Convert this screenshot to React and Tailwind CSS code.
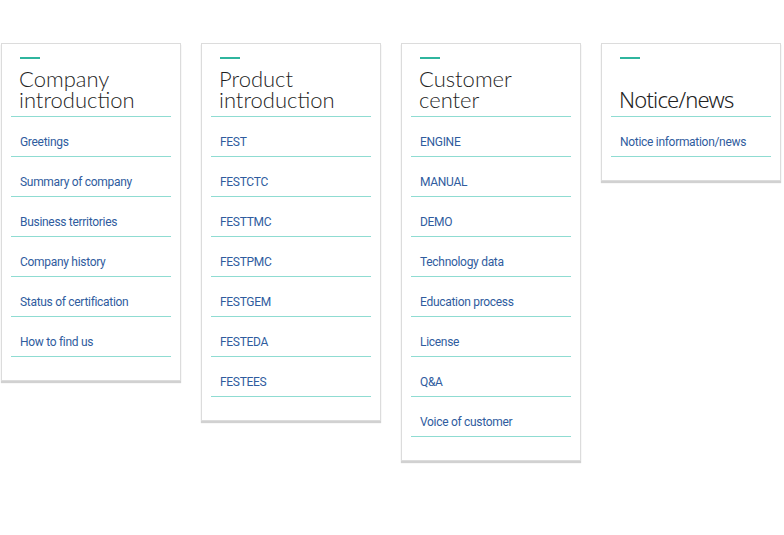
import React from "react";

const cards = [
  { title: ["Company", "introduction"], items: ["Greetings", "Summary of company", "Business territories", "Company history", "Status of certification", "How to find us"] },
  { title: ["Product", "introduction"], items: ["FEST", "FESTCTC", "FESTTMC", "FESTPMC", "FESTGEM", "FESTEDA", "FESTEES"] },
  { title: ["Customer", "center"], items: ["ENGINE", "MANUAL", "DEMO", "Technology data", "Education process", "License", "Q&A", "Voice of customer"] },
  { title: ["Notice/news"], items: ["Notice information/news"], single: true },
];

function Card({ title, items, single }) {
  return (
    <div className="w-[180px] bg-white border border-[#dcdcdc] shadow-[0_2px_1px_rgba(0,0,0,0.18)] px-[9px] pb-[23px]">
      <div className="h-[73px] border-b border-[#8fdcd2] flex flex-col pt-[13px] px-[9px]">
        <div className="w-[20px] h-[2px] bg-[#2fb59e]" />
        <div className="flex-1 flex flex-col justify-end pb-[6px] -ml-px">
          {single ? (
            <div className="text-[22px] leading-[22px] text-[#222] font-light font-['Noto_Sans',sans-serif] tracking-[-0.8px]">{title[0]}</div>
          ) : (
            title.map((t) => (
              <div key={t} className="text-[22px] leading-[21px] text-[#1f1f1f] font-light font-['Lato',sans-serif]">{t}</div>
            ))
          )}
        </div>
      </div>
      {items.map((it) => (
        <div key={it} className="h-[40px] border-b border-[#8fdcd2] pt-[17px] px-[9px]">
          <div className="text-[12px] leading-[16px] text-[#2f5c9e] font-['Roboto',sans-serif] tracking-[-0.3px]">{it}</div>
        </div>
      ))}
    </div>
  );
}

export default function App() {
  return (
    <div className="w-[784px] h-[535px] bg-white flex items-start gap-[20px] pt-[43px] pl-px">
      {cards.map((c, i) => (
        <Card key={i} {...c} />
      ))}
    </div>
  );
}
